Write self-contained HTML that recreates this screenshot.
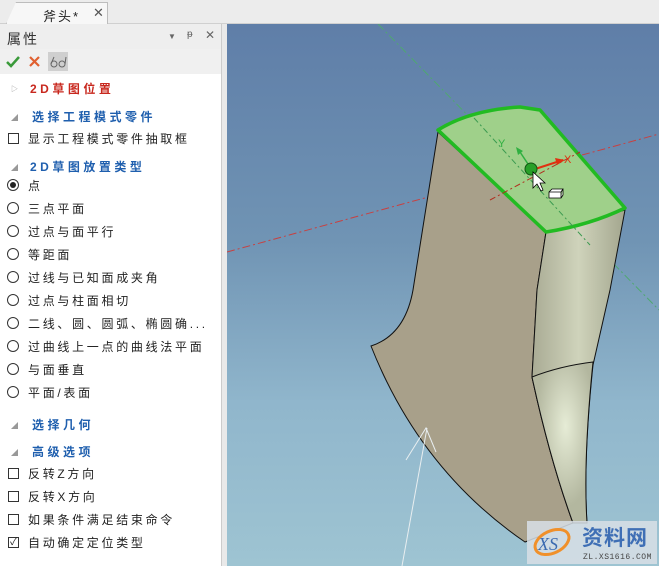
<!DOCTYPE html>
<html><head><meta charset="utf-8"><style>
*{margin:0;padding:0;box-sizing:border-box}
body{width:659px;height:566px;overflow:hidden;background:#e9e9e9;font-family:"Liberation Sans","Noto Sans CJK SC",sans-serif;position:relative}
.tabbar{position:absolute;left:0;top:0;width:659px;height:24px;background:#ececec;border-bottom:1px solid #d0d0d0}
.tab{position:absolute;left:6px;top:2px;width:102px;height:22px;background:#f7f7f7;border:1px solid #bdbdbd;border-bottom:none;clip-path:polygon(10px 0,100% 0,100% 100%,0 100%)}
.tab span{position:absolute;left:36px;top:3px;font-size:13px;color:#222;letter-spacing:2px}
.tab i{position:absolute;left:86px;top:2px;font-style:normal;font-size:13px;color:#555}
.panel{position:absolute;left:0;top:24px;width:222px;height:542px;background:#fff;border-right:1px solid #ccc}
.ph{position:absolute;left:0;top:0;width:221px;height:25px;background:#eeeeee}
.ph .t{position:absolute;left:7px;top:5px;font-size:14px;color:#333;letter-spacing:2px}
.tb{position:absolute;left:0;top:25px;width:221px;height:25px;background:#f0f0f0}
.row{position:absolute;left:0;font-size:12px;letter-spacing:2.7px;color:#222;white-space:nowrap;line-height:16px}
.txt{position:absolute;left:28px}
.hd{font-weight:bold;color:#1f5fae;letter-spacing:3.5px}
.red{color:#c8281e}
.arr{position:absolute;left:11px;font-size:7px;color:#999}
.cb{position:absolute;left:8px;top:2px;width:11px;height:11px;border:1px solid #333;background:#fff}
.rd{position:absolute;left:7px;top:1px;width:12px;height:12px;border:1px solid #333;border-radius:50%;background:#fff}
.rd.on::after{content:"";position:absolute;left:2px;top:2px;width:6px;height:6px;border-radius:50%;background:#222}
.view{position:absolute;left:227px;top:24px;width:432px;height:542px;background:linear-gradient(180deg,#5f7ea8 0%,#7094b4 40%,#90b6cc 70%,#9ec4d2 100%)}
</style></head><body>
<div class="tabbar"><div class="tab"><span>斧头*</span><i>✕</i></div></div>
<div class="panel">
 <div class="ph"><span class="t">属性</span>
  <span style="position:absolute;left:168px;top:8px;font-size:8px;color:#666">▼</span>
  <span style="position:absolute;left:187px;top:5px;font-size:10px;color:#666">ᵽ</span>
  <span style="position:absolute;left:205px;top:4px;font-size:12px;color:#666">✕</span></div>
 <div class="tb">
  <svg width="70" height="25" style="position:absolute;left:0;top:0">
   <path d="M7 13 L11 17 L19 8" stroke="#3a9a3a" stroke-width="2.5" fill="none"/>
   <path d="M30 8 L39 17 M39 8 L30 17" stroke="#e06030" stroke-width="2.2"/>
   <rect x="48" y="3" width="20" height="19" fill="#cfcfcf"/>
   <circle cx="54" cy="15" r="3" stroke="#666" fill="none"/><circle cx="62" cy="15" r="3" stroke="#666" fill="none"/>
   <path d="M51 15 L54 8 M65 15 L66 8" stroke="#666" fill="none"/>
  </svg>
 </div>
 <div class="row" style="top:57px"><span class="arr" style="top:1px">▷</span><span class="txt hd red" style="left:30px">2D草图位置</span></div>
 <div class="row" style="top:85px"><span class="arr" style="top:2px">◢</span><span class="txt hd" style="left:32px">选择工程模式零件</span></div>
 <div class="row" style="top:107px"><span class="cb"></span><span class="txt">显示工程模式零件抽取框</span></div>
 <div class="row" style="top:135px"><span class="arr" style="top:2px">◢</span><span class="txt hd" style="left:30px">2D草图放置类型</span></div>
 <div class="row" style="top:154px"><span class="rd on"></span><span class="txt">点</span></div>
 <div class="row" style="top:177px"><span class="rd"></span><span class="txt">三点平面</span></div>
 <div class="row" style="top:200px"><span class="rd"></span><span class="txt">过点与面平行</span></div>
 <div class="row" style="top:223px"><span class="rd"></span><span class="txt">等距面</span></div>
 <div class="row" style="top:246px"><span class="rd"></span><span class="txt">过线与已知面成夹角</span></div>
 <div class="row" style="top:269px"><span class="rd"></span><span class="txt">过点与柱面相切</span></div>
 <div class="row" style="top:292px"><span class="rd"></span><span class="txt">二线、圆、圆弧、椭圆确...</span></div>
 <div class="row" style="top:315px"><span class="rd"></span><span class="txt">过曲线上一点的曲线法平面</span></div>
 <div class="row" style="top:338px"><span class="rd"></span><span class="txt">与面垂直</span></div>
 <div class="row" style="top:361px"><span class="rd"></span><span class="txt">平面/表面</span></div>
 <div class="row" style="top:393px"><span class="arr" style="top:2px">◢</span><span class="txt hd" style="left:32px">选择几何</span></div>
 <div class="row" style="top:420px"><span class="arr" style="top:2px">◢</span><span class="txt hd" style="left:32px">高级选项</span></div>
 <div class="row" style="top:442px"><span class="cb"></span><span class="txt">反转Z方向</span></div>
 <div class="row" style="top:465px"><span class="cb"></span><span class="txt">反转X方向</span></div>
 <div class="row" style="top:488px"><span class="cb"></span><span class="txt">如果条件满足结束命令</span></div>
 <div class="row" style="top:511px"><span class="cb" style="font-size:10px;line-height:9px;text-align:center;letter-spacing:0">✓</span><span class="txt">自动确定定位类型</span></div>
</div>
<div class="view">
<svg width="432" height="542" viewBox="227 24 432 542" style="position:absolute;left:0;top:0">
 <defs>
  <linearGradient id="rs" x1="0" x2="1"><stop offset="0" stop-color="#a9ab94"/><stop offset="0.5" stop-color="#cfd3bb"/><stop offset="1" stop-color="#a3a68e"/></linearGradient>
  <radialGradient id="hl" cx="0.55" cy="0.4" r="0.5"><stop offset="0" stop-color="#e6ecd6"/><stop offset="1" stop-color="#b3b79f"/></radialGradient>
 </defs>
 <line x1="378" y1="24" x2="659" y2="310" stroke="#4fa870" stroke-width="1" stroke-dasharray="8 3 2 3"/>
 <line x1="227" y1="252" x2="659" y2="134" stroke="#c84040" stroke-width="1" stroke-dasharray="8 3 2 3"/>
 <path d="M438 132 L413 290 Q405 335 371 346 Q420 470 525 542 L573 523 Q550 460 532 377 L537 290 L546 232 Z" fill="#a8a08a" stroke="#111" stroke-width="1"/>
 <path d="M546 232 L537 290 L532 377 Q550 460 573 523 L587 523 Q583 460 593 365 L610 290 L625 210 Z" fill="url(#rs)" stroke="#111" stroke-width="1"/>
 <path d="M532 377 Q550 460 573 523 L587 523 Q583 460 593 362 Q560 366 532 377Z" fill="url(#hl)" stroke="#111" stroke-width="1"/>
 <path d="M438 130 Q470 110 520 107 L540 110 L625 208 Q590 225 546 232 Z" fill="#9fd08a" stroke="#22bb22" stroke-width="3.5" stroke-linejoin="round"/>
 <line x1="474" y1="118" x2="590" y2="245" stroke="#3b9a50" stroke-dasharray="6 3 2 3"/>
 <line x1="490" y1="200" x2="580" y2="152" stroke="#b03020" stroke-dasharray="6 3 2 3"/>
 <path d="M532 170 L563 160" stroke="#e03010" stroke-width="2"/><path d="M555 158 L565 160 L557 165Z" fill="#e03010"/>
 <text x="564" y="163" font-size="11" fill="#e03010" font-family="Liberation Sans">X</text>
 <path d="M532 170 L520 152" stroke="#30b040" stroke-width="1.5"/><path d="M516 147 L523 151 L518 155Z" fill="#30b040"/>
 <text x="498" y="147" font-size="11" fill="#30b040" font-family="Liberation Sans">Y</text>
 <circle cx="531" cy="169" r="6" fill="#28a028" stroke="#115511"/>
 <path d="M533 172 L533 188 L537 184 L541 191 L543 190 L540 183 L545 183 Z" fill="#fff" stroke="#000" stroke-width="0.8"/>
 <path d="M549 192 L561 192 L561 198 L549 198Z M549 192 L552 189 L563 189 L561 192 M561 198 L563 195 L563 189" fill="#fff" stroke="#000" stroke-width="0.8"/>
 <path d="M406 460 L426 428 L436 452 M427 428 L402 566" stroke="#e8eef0" stroke-width="1" fill="none"/>
 <rect x="527" y="521" width="130" height="43" fill="#d8dfe6" opacity="0.85"/>
 <ellipse cx="552" cy="542" rx="18" ry="11" fill="none" stroke="#f0902a" stroke-width="3" transform="rotate(-25 552 542)"/>
 <text x="538" y="550" font-size="18" font-style="italic" fill="#3a6ab0" font-family="Liberation Serif">XS</text>
 <text x="582" y="545" font-size="21" font-weight="bold" fill="#3f6fb5" font-family="Liberation Sans,Noto Sans CJK SC,sans-serif" letter-spacing="1">资料网</text>
 <text x="583" y="559" font-size="8" fill="#444" font-family="Liberation Mono" letter-spacing="0.5">ZL.XS1616.COM</text>
</svg>
</div>
</body></html>
